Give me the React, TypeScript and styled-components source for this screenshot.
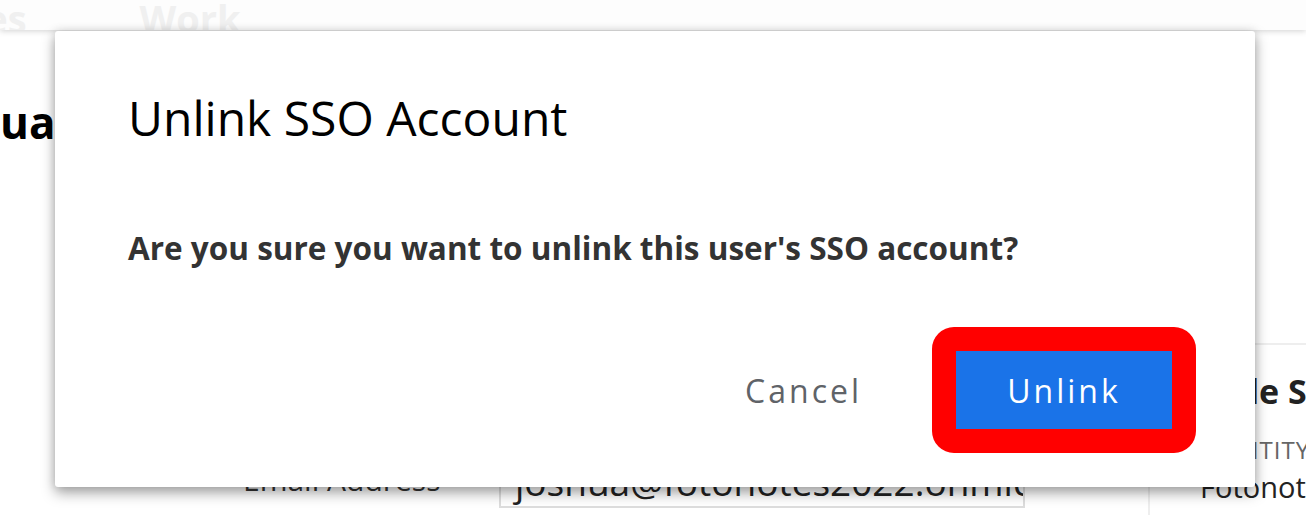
import React from "react";
import styled, { createGlobalStyle } from "styled-components";

const Global = createGlobalStyle`
  html, body { margin: 0; padding: 0; background: #ffffff; overflow: hidden; }
  body { font-family: "Open Sans", "Noto Sans", sans-serif; width: 1306px; height: 515px; }
`;

const Page = styled.div`
  width: 1306px;
  height: 515px;
  position: relative;
  overflow: hidden;
  display: flex;
  flex-direction: column;
`;

const Header = styled.header`
  height: 30px;
  flex: 0 0 30px;
  background: #fdfdfd;
  box-shadow: 0 1px 6px rgba(0, 0, 0, 0.18);
  display: flex;
  align-items: flex-end;
  gap: 113px;
  overflow: hidden;
  position: relative;
  z-index: 1;
`;

const NavItem = styled.span<{ $shift?: number }>`
  font-family: "Open Sans", sans-serif;
  font-weight: 700;
  font-size: 38px;
  line-height: 38px;
  color: #f0f0f0;
  margin-bottom: -7px;
  margin-left: ${(p) => p.$shift ?? 0}px;
  white-space: nowrap;
`;

const Main = styled.main`
  flex: 1;
  display: grid;
  grid-template-columns: 1148px 1fr;
`;

const LeftCol = styled.section`
  display: flex;
  flex-direction: column;
  min-width: 0;
`;

const PageTitle = styled.h1`
  margin: 68px 0 0 0;
  font-size: 44px;
  font-weight: 700;
  color: #000;
  line-height: 48px;
`;

const FormRow = styled.div`
  margin-top: auto;
  display: flex;
  align-items: flex-end;
  gap: 52px;
  padding-left: 243px;
  margin-bottom: 7px;
`;

const Label = styled.label`
  font-size: 30px;
  color: #333;
  width: 204px;
  white-space: nowrap;
  margin-bottom: 8px;
`;

const Input = styled.div`
  width: 526px;
  flex: 0 0 526px;
  height: 56px;
  border: 2px solid #dddddd;
  font-size: 37px;
  line-height: 44px;
  color: #222;
  padding: 0 4px 2px 14px;
  box-sizing: border-box;
  display: flex;
  align-items: flex-end;
  white-space: nowrap;
  overflow: hidden;
`;

const SidePanel = styled.aside`
  margin-top: 313px;
  border-top: 2px solid #eeeeee;
  border-left: 2px solid #eeeeee;
  padding: 24px 0 0 50px;
  white-space: nowrap;
  overflow: hidden;
  min-width: 0;
`;

const SideTitle = styled.div`
  margin-left: -22px;
  font-size: 34px;
  line-height: 44px;
  font-weight: 700;
  color: #222;
`;

const SideLabel = styled.div`
  margin-top: 22px;
  font-size: 24px;
  line-height: 30px;
  letter-spacing: 1px;
  color: #666;
  text-transform: uppercase;
`;

const SideValue = styled.div`
  margin-top: 4px;
  font-size: 29px;
  line-height: 36px;
  color: #222;
`;

const Dialog = styled.div`
  position: absolute;
  left: 55px;
  top: 31px;
  width: 1200px;
  height: 456px;
  box-sizing: border-box;
  background: #ffffff;
  border-radius: 3px;
  box-shadow: 0 6px 14px rgba(0, 0, 0, 0.35), 0 0 10px rgba(0, 0, 0, 0.12);
  padding: 54px 59px 0 73px;
  display: flex;
  flex-direction: column;
  z-index: 2;
`;

const DialogTitle = styled.h2`
  margin: 0;
  font-family: "Open Sans", sans-serif;
  font-weight: 400;
  font-size: 48px;
  line-height: 66px;
  color: #000;
`;

const DialogBody = styled.p`
  margin: 76px 0 0;
  font-family: "Open Sans", sans-serif;
  font-weight: 700;
  font-size: 31.5px;
  line-height: 42px;
  color: #333;
`;

const Actions = styled.div`
  margin-top: 58px;
  display: flex;
  justify-content: flex-end;
  align-items: center;
  gap: 70px;
`;

const TextButton = styled.button`
  border: none;
  background: transparent;
  font-family: "Open Sans", sans-serif;
  font-size: 32px;
  letter-spacing: 3px;
  color: #5f6368;
  padding: 0;
  cursor: pointer;
`;

const Highlight = styled.div`
  border: 24px solid #ff0000;
  border-radius: 22px;
  display: flex;
`;

const PrimaryButton = styled.button`
  width: 216px;
  height: 78px;
  border: none;
  background: #1a73e8;
  color: #ffffff;
  font-family: "Open Sans", sans-serif;
  font-size: 32px;
  letter-spacing: 3px;
  padding: 0;
  cursor: pointer;
`;

export default function App() {
  return (
    <Page>
      <Global />
      <Header>
        <NavItem $shift={-75}>Roles</NavItem>
        <NavItem>Work</NavItem>
      </Header>
      <Main>
        <LeftCol>
          <PageTitle>ua</PageTitle>
          <FormRow>
            <Label>Email Address</Label>
            <Input>joshua@fotonotes2022.onmicrosoft.com</Input>
          </FormRow>
        </LeftCol>
        <SidePanel>
          <SideTitle>Single Sign-On</SideTitle>
          <SideLabel>Identity Provider</SideLabel>
          <SideValue>Fotonotes</SideValue>
        </SidePanel>
      </Main>
      <Dialog role="dialog" aria-modal="true">
        <DialogTitle>Unlink SSO Account</DialogTitle>
        <DialogBody>Are you sure you want to unlink this user's SSO account?</DialogBody>
        <Actions>
          <TextButton>Cancel</TextButton>
          <Highlight>
            <PrimaryButton>Unlink</PrimaryButton>
          </Highlight>
        </Actions>
      </Dialog>
    </Page>
  );
}
